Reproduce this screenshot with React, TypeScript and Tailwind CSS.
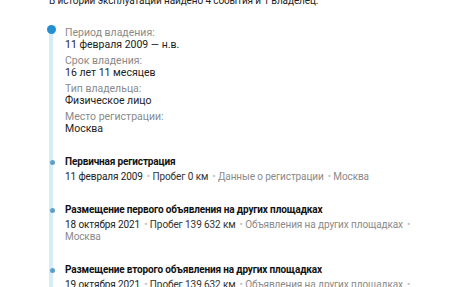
const owner = [
  { label: "Период владения:", value: "11 февраля 2009 — н.в." },
  { label: "Срок владения:", value: "16 лет 11 месяцев" },
  { label: "Тип владельца:", value: "Физическое лицо" },
  { label: "Место регистрации:", value: "Москва" },
];

const events = [
  {
    title: "Первичная регистрация",
    meta: ["11 февраля 2009", "Пробег 0 км", "Данные о регистрации", "Москва"],
  },
  {
    title: "Размещение первого объявления на других площадках",
    meta: ["18 октября 2021", "Пробег 139 632 км", "Объявления на других площадках", "Москва"],
  },
  {
    title: "Размещение второго объявления на других площадках",
    meta: ["19 октября 2021", "Пробег 139 632 км", "Объявления на других площадках", "Москва"],
  },
];

function Meta({ items }: { items: string[] }) {
  return (
    <p className="text-[10px] leading-[12px] text-[#222] w-[362px] tracking-[-0.1px]">
      {items.map((m, i) => (
        <span key={i}>
          <span className={i >= 2 ? "text-[#8a8a8a]" : i === 1 ? "text-[#333]" : ""}>{m}</span>
          {i < items.length - 1 && (
            <>
              <span className="text-[#c4c4c4] ml-[4px]">•</span>{" "}
            </>
          )}
        </span>
      ))}
    </p>
  );
}

export default function App() {
  return (
    <div className="w-[456px] h-[287px] overflow-hidden bg-white pl-[49px] font-['Roboto',sans-serif]">
      <p className="-mt-[6px] text-[10px] leading-[14px] text-[#222] tracking-[-0.1px]">
        В истории эксплуатации найдено 4 события и 1 владелец.
      </p>

      <div className="relative mt-[17px] border-l-4 border-[#d4edf9] pl-[12px] pt-[2px] pb-10">
        <span className="absolute -left-[6.5px] top-0 w-[9px] h-[9px] rounded-full bg-[#2391d1]" />
        <div className="flex flex-col gap-[4px]">
          {owner.map((o) => (
            <div key={o.label} className="text-[10.5px] leading-[12px]">
              <div className="text-[#8a8a8a]">{o.label}</div>
              <div className="text-[#222]">{o.value}</div>
            </div>
          ))}
        </div>

        {events.map((e) => (
          <div key={e.title} className="relative mt-[21px]">
            <span className="absolute -left-[15px] top-[4px] w-[5px] h-[5px] rounded-full bg-[#5e9fc6]" />
            <div className="text-[10px] leading-[12px] font-bold text-[#111] tracking-[-0.15px]">{e.title}</div>
            <div className="mt-[3px]">
              <Meta items={e.meta} />
            </div>
          </div>
        ))}
      </div>
    </div>
  );
}
